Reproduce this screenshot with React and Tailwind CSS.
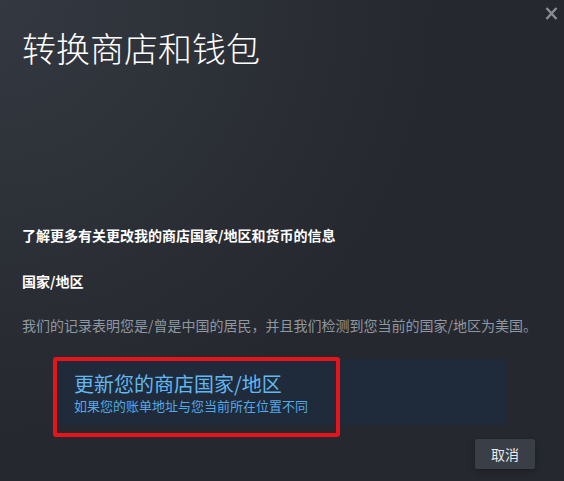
export default function App() {
  return (
    <div
      className="relative w-[564px] h-[481px] overflow-hidden bg-[#25282e] bg-[radial-gradient(circle_at_top_left,rgba(74,81,92,0.4)_0%,rgba(75,81,92,0)_60%)] flex flex-col"
      style={{ fontFamily: '"Noto Sans CJK SC", "Noto Sans", Arial, sans-serif' }}
    >
      <button className="absolute top-[7px] left-[545px] w-[13px] h-[13px]">
        <svg width="13" height="13" viewBox="0 0 13 13">
          <path d="M1.5 1 L11.5 12 M11.5 1 L1.5 12" stroke="#8a8d92" strokeWidth="2.4" fill="none" />
        </svg>
      </button>
      <h1 className="mt-[27px] ml-[22px] text-[34px] leading-[42px] font-light text-[#ffffff]">
        转换商店和钱包
      </h1>
      <div className="mt-[156px] ml-[22px] text-[14px] leading-[20px] font-bold text-[#ffffff]">
        了解更多有关更改我的商店国家/地区和货币的信息
      </div>
      <div className="mt-[26px] ml-[22px] text-[14px] leading-[20px] font-bold text-[#ffffff]">
        国家/地区
      </div>
      <div className="mt-[24px] ml-[22px] text-[14px] leading-[20px] text-[#8f98a0]">
        我们的记录表明您是/曾是中国的居民，并且我们检测到您当前的国家/地区为美国。
      </div>
      <div className="relative mt-[24px] ml-[55px] w-[450px] h-[66px] bg-[#1f2a3b] pt-[12px] pl-[19px]">
        <div className="text-[20px] leading-[26px] text-[#62b8ef]">更新您的商店国家/地区</div>
        <div className="text-[13px] leading-[18px] text-[#55a8e2]">如果您的账单地址与您当前所在位置不同</div>
        <div className="absolute -top-[2px] -left-[2px] w-[287px] h-[80px] border-4 border-[#e8141c] rounded-[3px]" />
      </div>
      <div className="flex justify-end mt-[14px] mr-[29px]">
        <button className="w-[60px] h-[30px] rounded-[2px] bg-[#393e47] text-[14px] text-[#e8eaec] shadow-[0_2px_6px_rgba(0,0,0,0.3)]">
          取消
        </button>
      </div>
    </div>
  );
}
